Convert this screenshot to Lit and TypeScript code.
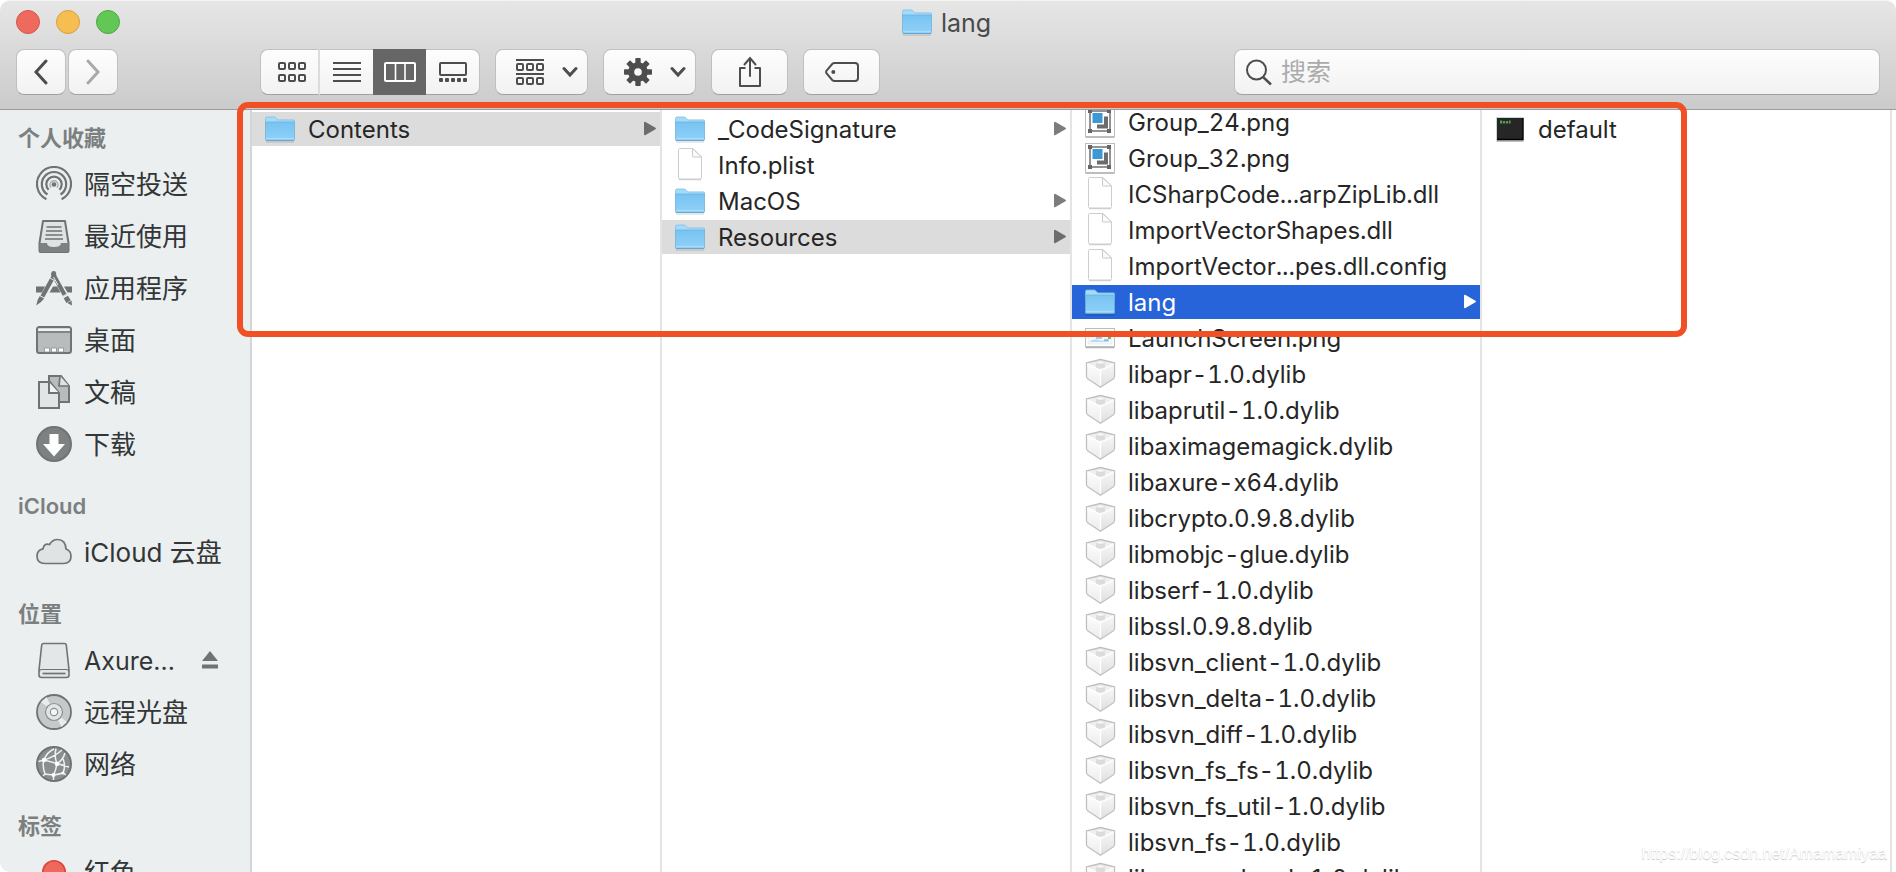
import { LitElement, html, css, svg } from "lit";
import { customElement, property } from "lit/decorators.js";
import { classMap } from "lit/directives/class-map.js";

type Kind = "folder" | "file" | "group" | "shot" | "brick" | "exec";
interface Entry { name: string; kind: Kind; open?: boolean; active?: boolean; }

const folderArt = html`<svg width="32" height="28" viewBox="0 0 32 28" aria-hidden="true">
  <defs>
    <linearGradient id="fb" x1="0" y1="0" x2="0" y2="1"><stop offset="0" stop-color="#77c3f1"/><stop offset="1" stop-color="#90d1f8"/></linearGradient>
  </defs>
  <path d="M2 27h28" stroke="#000" stroke-opacity=".12" stroke-width="1.5"/>
  <path d="M1.5 3.5q0-1.5 1.5-1.5h7q1 0 1.700.8l1.600 1.700q.4.400 1.200.4H29.500q1 0 1 1V10H1.500z" fill="#a3dbfb" stroke="#7dbfe6" stroke-width=".8"/>
  <path d="M1.500 7h29v17.500q0 1-1 1h-27q-1 0-1-1z" fill="url(#fb)" stroke="#6fb3dc" stroke-width=".8"/>
  <path d="M2 23.500h28" stroke="#a9dcf9" stroke-width="1"/>
  <path d="M2 25.500h28" stroke="#67a6cd" stroke-width="1"/>
</svg>`;

const fileArt = html`<svg width="32" height="34" viewBox="0 0 32 34" aria-hidden="true">
  <path d="M5 31.500h22" stroke="#000" stroke-opacity=".18" stroke-width="1.500"/>
  <path d="M5.500 .5h13.500L27.500 9v20.500q0 1.500-1.500 1.500H6q-1.500 0-1.500-1.500V1.500q0-1 1-1z" fill="#fff" stroke="#cdcdcd"/>
  <path d="M18.500 .5v7.500q0 1 1 1h8z" fill="#fbfbfb" stroke="#c9c9c9"/>
</svg>`;

const groupArt = html`<svg width="32" height="32" viewBox="0 0 32 32" aria-hidden="true">
  <path d="M1.500 31h29" stroke="#000" stroke-opacity=".35" stroke-width="1.500"/>
  <rect x="1.500" y="1.500" width="29" height="29" fill="#fff" stroke="#bdbdbd"/>
  <rect x="6" y="5" width="20" height="20" fill="none" stroke="#666" stroke-width="1.400"/>
  <path d="M13 20.500h9v-10" fill="none" stroke="#6c6c6c" stroke-width="4"/>
  <rect x="8" y="6.500" width="11" height="11" fill="#3d98d8" stroke="#fff"/>
  <path d="M4 3h4v4H4zM23 3h4v4h-4zM4 23h4v4H4zM23 23h4v4h-4z" fill="#666"/>
</svg>`;

const shotArt = html`<svg width="32" height="22" viewBox="0 0 32 22" aria-hidden="true">
  <path d="M1.500 20.500h29" stroke="#000" stroke-opacity=".3" stroke-width="1.500"/>
  <rect x="1.500" y="1.500" width="29" height="18" fill="#fff" stroke="#bdbdbd"/>
  <rect x="4" y="4" width="24" height="13" fill="#f3f8fb" stroke="#dde3e6" stroke-width=".6"/>
  <path d="M5 15q5-4 10-2t10-2v4z" fill="#b9dcee"/><path d="M12 11h6M20 13h4" stroke="#4aa0c8"/><rect x="24" y="9" width="3" height="3" fill="#71b95a"/>
</svg>`;

const brickArt = html`<svg width="32" height="32" viewBox="0 0 32 32" aria-hidden="true">
  <defs>
    <linearGradient id="bl" x1="0" y1="0" x2="0" y2="1"><stop offset="0" stop-color="#fdfdfd"/><stop offset="1" stop-color="#ececec"/></linearGradient>
    <linearGradient id="br" x1="0" y1="0" x2="0" y2="1"><stop offset="0" stop-color="#f7f7f7"/><stop offset="1" stop-color="#dfdfdf"/></linearGradient>
  </defs>
  <path d="M16.500 1.500L30.500 4.800v13.700q-.2 1.600-1.500 2.500L16.500 29.300 4 21Q2.700 20 2.500 18.500V4.800z" fill="#efefef" stroke="#bebebe" stroke-width="1.300" stroke-linejoin="round"/>
  <path d="M3.300 6.200L16.500 12.500V28.300L4.700 20.200q-1-.8-1.200-2z" fill="url(#bl)"/>
  <path d="M29.700 6.200L16.500 12.500V28.300L28.300 20.200q1-.8 1.200-2z" fill="url(#br)"/>
  <path d="M3.300 5.800l13.200 6.300 13.200-6.300M16.500 12v15" fill="none" stroke="#fff" stroke-width="1.400"/>
  <path d="M12 4.500v5q4.500 2.500 9 0v-5z" fill="#dcdcdc"/>
  <ellipse cx="16.500" cy="4.500" rx="4.500" ry="1.700" fill="#f7f7f7" stroke="#d2d2d2" stroke-width=".7"/>
</svg>`;

const execArt = html`<svg width="32" height="28" viewBox="0 0 32 28" aria-hidden="true">
  <path d="M2.500 26h27" stroke="#000" stroke-opacity=".25" stroke-width="2"/>
  <rect x="2.500" y="2.500" width="27" height="22" fill="#262626" stroke="#c5d6da"/>
  <path d="M3 24.500h26V3" fill="none" stroke="#000" stroke-width="1.300"/>
  <path d="M6 5.500h2.200v3H6zM9 6h2.200v2.500H9zM12 6h2.200v2.500H12zM15 5.500h1.600v3H15z" fill="#5bb552" opacity=".85"/>
</svg>`;

const ART: Record<Kind, unknown> = { folder: folderArt, file: fileArt, group: groupArt, shot: shotArt, brick: brickArt, exec: execArt };

const svgIcon = (w: number, h: number, body: unknown) =>
  html`<svg width=${w} height=${h} viewBox="0 0 ${w} ${h}" fill="none" aria-hidden="true">${body}</svg>`;

const chevron = svgIcon(16, 12, svg`<path d="M2 2.500l6 6.500 6-6.500" stroke="#4d4d4d" stroke-width="3" stroke-linecap="round"/>`);

const gearTeeth = [0, 45, 90, 135, 180, 225, 270, 315];

const TOOL = {
  back: svgIcon(16, 26, svg`<path d="M13 2L3 13l10 11" stroke="#4d4d4d" stroke-width="3" stroke-linecap="round"/>`),
  fwd: svgIcon(16, 26, svg`<path d="M3 2l10 11L3 24" stroke="#a9a9a9" stroke-width="3" stroke-linecap="round"/>`),
  grid: svgIcon(28, 20, svg`<g stroke="#4d4d4d" stroke-width="2">${[1, 11, 21].map(x => [1, 13].map(y => svg`<rect x=${x} y=${y} width="6" height="6" rx="1"/>`))}</g>`),
  list: svgIcon(28, 20, svg`<path d="M0 1h28M0 7h28M0 13h28M0 19h28" stroke="#4d4d4d" stroke-width="2"/>`),
  cols: svgIcon(32, 20, svg`<rect x="1" y="1" width="30" height="18" rx="1" stroke="#fff" stroke-width="2"/><path d="M11.500 1v18M21 1v18" stroke="#fff" stroke-width="1.600"/>`),
  gallery: svgIcon(28, 20, svg`<rect x="1" y="1" width="26" height="12" rx="1" stroke="#4d4d4d" stroke-width="2"/>${[0, 6, 12, 18, 24].map(x => svg`<rect x=${x} y="16" width="4" height="4" rx="1" fill="#4d4d4d"/>`)}`),
  arrange: svgIcon(28, 26, svg`<path d="M0 1h28M0 15h28" stroke="#4d4d4d" stroke-width="2"/><g stroke="#4d4d4d" stroke-width="2">${[1, 11, 21].map(x => [5, 19].map(y => svg`<rect x=${x} y=${y} width="6" height="6" rx="1"/>`))}</g>`),
  gear: svgIcon(28, 28, svg`${gearTeeth.map(a => svg`<rect x="11.300" y="0" width="5.400" height="8" rx=".8" fill="#4d4d4d" transform="rotate(${a} 14 14)"/>`)}<circle cx="14" cy="14" r="6.800" stroke="#4d4d4d" stroke-width="6"/>`),
  share: svgIcon(22, 32, svg`<path d="M6.500 12H1v18h20V12h-5.500" stroke="#4d4d4d" stroke-width="2" stroke-linejoin="round"/><path d="M11 20V3M5.500 8.500L11 2l5.500 6.500" stroke="#4d4d4d" stroke-width="2" stroke-linecap="round"/>`),
  tag: svgIcon(34, 20, svg`<path d="M9.500 1H30q3 0 3 3v12q0 3-3 3H9.500q-1.300 0-2.300-1L1.600 11.500q-1-1.500 0-3L7.200 2q1-1 2.300-1z" stroke="#4d4d4d" stroke-width="2"/><circle cx="8.300" cy="10" r="2" fill="#4d4d4d"/>`),
  search: svgIcon(28, 28, svg`<circle cx="11.500" cy="12" r="9.500" stroke="#4d4d4d" stroke-width="2"/><path d="M18 19l8 7.500" stroke="#4d4d4d" stroke-width="2.400"/>`),
};

const G = "#6f7373";
const SIDE = {
  airdrop: svgIcon(36, 36, svg`<g stroke=${G} stroke-width="2.200">
    <path d="M10.400 33.200A17 17 0 1 1 25.600 33.200"/><path d="M11.500 28.500A12.200 12.200 0 1 1 24.500 28.500" /><path d="M12.600 23.500A7.700 7.700 0 1 1 23.400 23.500" transform="translate(0 .3)"/></g>
    <path d="M15 21.500a4 4 0 1 1 6 0" stroke=${G} stroke-width="1.600" opacity=".5"/><circle cx="18" cy="18.500" r="2.300" fill=${G}/>`),
  recent: svgIcon(36, 36, svg`<path d="M7 3h22l3.500 22v8q0 1-1 1h-27q-1 0-1-1v-8z" fill="#dfe3e4" stroke=${G} stroke-width="2" stroke-linejoin="round"/>
    <path d="M10.500 9h15M10 13h16M9.500 17h17M9 21h18" stroke=${G} stroke-width="1.700"/><path d="M3.500 25H11q0 4 7 4t7-4h7.500v9h-29z" fill="#7d8182"/>`),
  apps: svgIcon(36, 36, svg`<path d="M0 16.500h9l-3.200 6H0zM17 16.500h4.200l3.300 6H13.500zM28 16.500H36v6h-4.500z" fill=${G}/>
    <path d="M18.800 4L5.800 27.500" stroke=${G} stroke-width="4.200"/><path d="M16.500 3L29 25.500" stroke=${G} stroke-width="4.200"/><circle cx="17.700" cy="3.300" r="2.400" fill=${G}/>
    <path d="M3.800 26l4.400 2.400Q5 32.500.3 35.500 .8 30 3.800 26z" fill=${G}/><path d="M29.800 27l2.800 4.600" stroke=${G} stroke-width="5"/><path d="M31.300 33l4.200-2.600.5 5z" fill=${G}/>
    <path d="M13.800 7.800l5 3M26.200 26.700l5.200-3M3.300 25.300l5.400 3M17.500 7l4.500 8" stroke="#ebeff0" stroke-width="1"/>`),
  desktop: svgIcon(36, 30, svg`<rect x="1" y="2" width="34" height="26" rx="2.500" fill="#b9bcbd" stroke=${G} stroke-width="2"/><path d="M2 3.500h32v2.500H2z" fill="#f0f3f4"/><path d="M1 7h34" stroke=${G} stroke-width="1.600"/><path d="M8.500 23h5v4h-5zM15.500 23h5v4h-5zM22.500 23h5v4h-5z" fill="#fff" stroke="#8a8d8e" stroke-width=".8"/>`),
  docs: svgIcon(36, 36, svg`<path d="M13 2h12l8 10v16H13z" fill="#b9bcbd" stroke=${G} stroke-width="2"/><path d="M24 2l-1 10h10" fill="#dfe3e4" stroke=${G} stroke-width="1.700"/><path d="M3 8h11l9 11v15H3z" fill="#e2e5e6" stroke=${G} stroke-width="2"/><path d="M13 8v11h10" fill="#f1f3f4" stroke=${G} stroke-width="2"/>`),
  down: svgIcon(36, 36, svg`<circle cx="18" cy="18" r="17" fill="#7d8182" stroke=${G} stroke-width="2"/><path d="M13.500 8h9v10h6.500L18 30.500 7 18h6.500z" fill="#fff"/>`),
  cloud: svgIcon(36, 30, svg`<path d="M9 26.500q-8 0-8-7.500 0-6 6-7.200Q8 5.800 13.500 7.500 16.500 2.500 21.500 2.500q8 0 8.500 9.500 5 1.800 5 7 0 7.500-7.500 7.500z" fill="#dfe3e4" stroke=${G} stroke-width="1.700"/>`),
  drive: svgIcon(36, 38, svg`<path d="M7.500 2.500h21q1.500 0 1.800 1.500L33 29v5q0 2.500-2.500 2.500h-25Q3 36.500 3 34v-5L5.700 4q.3-1.500 1.800-1.500z" fill="#e4e7e8" stroke=${G} stroke-width="1.600"/><path d="M3.500 30.500q0-2 2-2h25q2 0 2 2" stroke=${G} stroke-width="1.200"/><path d="M6.500 32.500h23" stroke=${G} stroke-width="1.700"/>`),
  disc: svgIcon(36, 36, svg`<circle cx="18" cy="18" r="17" fill="#c5c9ca" stroke=${G} stroke-width="1.800"/><path d="M18 18L5 8l5.500-5zM18 18l13 10-5.500 5z" fill="#e9eced"/><circle cx="18" cy="18" r="8.500" fill="#e1e5e6" stroke="#8b8f90" stroke-width="1.200"/><circle cx="18" cy="18" r="3.700" fill="#f4f6f6" stroke="#8b8f90" stroke-width="1.200"/>`),
  net: svgIcon(36, 36, svg`<circle cx="18" cy="18" r="17" fill="#8a8e8f" stroke=${G} stroke-width="2"/><g stroke="#eef1f1" stroke-width="1.500"><path d="M8 14Q11 6 18 3M8 14q8 2 13 3.500T33 21M21 17.500Q18 11 20 2.500M21 17.500Q27 14 29 7M8 14Q6 20 9 28M2.500 15.500L8 14M21 17.500Q20 24 17.500 29M9 28q9 2 18-1M27 27Q30 20 27 13M17.500 29v5M9 28l-2 2M27 27l3 2M8 14Q18 11 26 4"/></g><g fill="#fff"><circle cx="8" cy="14" r="2.200"/><circle cx="21" cy="18" r="2.200"/><circle cx="17.500" cy="29" r="2"/><circle cx="27" cy="27" r="1.600"/></g>`),
  red: svgIcon(36, 24, svg`<circle cx="18" cy="12" r="11.200" fill="#ec695c" stroke="#e0443a" stroke-width="1.600"/>`),
};

const SECTIONS: { title: string; items: { label: string; icon: keyof typeof SIDE; eject?: boolean }[] }[] = [
  { title: "个人收藏", items: [
    { label: "隔空投送", icon: "airdrop" }, { label: "最近使用", icon: "recent" }, { label: "应用程序", icon: "apps" },
    { label: "桌面", icon: "desktop" }, { label: "文稿", icon: "docs" }, { label: "下载", icon: "down" } ] },
  { title: "iCloud", items: [{ label: "iCloud 云盘", icon: "cloud" }] },
  { title: "位置", items: [
    { label: "Axure...", icon: "drive", eject: true }, { label: "远程光盘", icon: "disc" }, { label: "网络", icon: "net" } ] },
  { title: "标签", items: [{ label: "红色", icon: "red" }] },
];

const lib = (name: string): Entry => ({ name: `${name}.dylib`, kind: "brick" });
const COLUMNS: { scrolled?: boolean; entries: Entry[] }[] = [
  { entries: [{ name: "Contents", kind: "folder", open: true }] },
  { entries: [
    { name: "_CodeSignature", kind: "folder" }, { name: "Info.plist", kind: "file" },
    { name: "MacOS", kind: "folder" }, { name: "Resources", kind: "folder", open: true } ] },
  { scrolled: true, entries: [
    { name: "Group_24.png", kind: "group" }, { name: "Group_32.png", kind: "group" },
    { name: "ICSharpCode...arpZipLib.dll", kind: "file" }, { name: "ImportVectorShapes.dll", kind: "file" },
    { name: "ImportVector...pes.dll.config", kind: "file" }, { name: "lang", kind: "folder", active: true },
    { name: "LaunchScreen.png", kind: "shot" },
    ...["libapr-1.0", "libaprutil-1.0", "libaximagemagick", "libaxure-x64", "libcrypto.0.9.8", "libmobjc-glue", "libserf-1.0",
      "libssl.0.9.8", "libsvn_client-1.0", "libsvn_delta-1.0", "libsvn_diff-1.0", "libsvn_fs_fs-1.0", "libsvn_fs_util-1.0",
      "libsvn_fs-1.0", "libsvn_ra_local-1.0"].map(lib) ] },
  { entries: [{ name: "default", kind: "exec" }] },
];

const FONT = css`Inter, "Noto Sans CJK SC", sans-serif`;

@customElement("finder-toolbar")
class FinderToolbar extends LitElement {
  static styles = css`
    :host { display: block; font-family: ${FONT}; }
    .bar { height: 110px; box-sizing: border-box; border-top: 1px solid #f3f3f3; border-bottom: 1px solid #9c9c9c;
      background: linear-gradient(#e6e6e6, #cbcbcb); border-radius: 10px 10px 0 0; padding: 0 16px; }
    .title-row { display: grid; grid-template-columns: 104px 1fr 108px; align-items: center; height: 42px; }
    .lights { display: flex; gap: 16px; }
    .light { width: 24px; height: 24px; padding: 0; border-radius: 50%; border: 1px solid; }
    .close { background: #ee6a5f; border-color: #d5564c; }
    .min { background: #f6be50; border-color: #d8a040; }
    .max { background: #62c755; border-color: #4fa843; }
    .title { margin: 0; display: flex; align-items: center; justify-content: center; gap: 8px; font-size: 25px; line-height: 28px; font-weight: 400; color: #4a4a4a; }
    .name { padding-top: 2px; }
    .tools { display: flex; align-items: center; padding-top: 6px; }
    .btn { height: 46px; box-sizing: border-box; flex: none; display: flex; align-items: center; justify-content: center; padding: 0;
      border: 1px solid #c0c0c0; border-bottom-color: #a2a2a2; border-radius: 8px; background: linear-gradient(#fdfdfd, #f2f2f2); }
    .nav { width: 50px; margin-right: 2px; }
    .views { display: flex; flex: none; margin-left: 140px; width: 220px; }
    .views .btn { flex: 1 1 0; border-radius: 0; border-left-width: 0; border-right-width: 0; }
    .views .btn:first-child { border-radius: 8px 0 0 8px; border-left-width: 1px; border-right: 2px solid #dcdcdc; padding-left: 4px; }
    .views .btn:last-child { border-radius: 0 8px 8px 0; border-right-width: 1px; }
    .views .on { background: #666; border-color: #666; }
    .menu { width: 93px; margin-left: 15px; gap: 18px; justify-content: flex-start; padding-left: 20px; }
    .single { width: 77px; margin-left: 15px; }
    .btn.search { flex: 1 1 0; min-width: 0; margin-left: 354px; justify-content: flex-start; gap: 8px; padding: 0 10px; }
    .search input { flex: 1; min-width: 0; border: 0; background: none; outline: 0; padding: 0; font-family: ${FONT}; font-size: 25px; height: 36px; }
    .search input::placeholder { color: #ababab; opacity: 1; }
  `;
  render() {
    return html`<header class="bar">
      <div class="title-row">
        <div class="lights"><button class="light close" aria-label="关闭"></button><button class="light min" aria-label="最小化"></button><button class="light max" aria-label="缩放"></button></div>
        <h1 class="title">${folderArt}<span class="name">lang</span></h1>
      </div>
      <div class="tools">
        <button class="btn nav" aria-label="后退">${TOOL.back}</button>
        <button class="btn nav" aria-label="前进">${TOOL.fwd}</button>
        <div class="views" role="group" aria-label="显示">
          <button class="btn" aria-label="图标">${TOOL.grid}</button>
          <button class="btn" aria-label="列表">${TOOL.list}</button>
          <button class="btn on" aria-label="分栏" aria-pressed="true">${TOOL.cols}</button>
          <button class="btn" aria-label="画廊">${TOOL.gallery}</button>
        </div>
        <button class="btn menu" aria-label="分组">${TOOL.arrange}${chevron}</button>
        <button class="btn menu" aria-label="操作">${TOOL.gear}${chevron}</button>
        <button class="btn single" aria-label="共享">${TOOL.share}</button>
        <button class="btn single" aria-label="标签">${TOOL.tag}</button>
        <label class="btn search">${TOOL.search}<input type="search" placeholder="搜索" aria-label="搜索" /></label>
      </div>
    </header>`;
  }
}

@customElement("finder-sidebar")
class FinderSidebar extends LitElement {
  static styles = css`
    :host { display: block; font-family: ${FONT}; background: #ebeff0; overflow: hidden; border-right: 2px solid #d3d6d6; border-bottom-left-radius: 10px; }
    .nav { padding-top: 8px; }
    .section { margin-bottom: 16px; }
    .head { margin: 0; padding-left: 18px; font-size: 22px; line-height: 40px; height: 40px; font-weight: 600; color: #7c7f80; }
    .list { margin: 0; padding: 0; list-style: none; }
    .row { display: flex; align-items: center; height: 52px; padding: 0 32px 0 36px; }
    .link { flex: 1; display: flex; align-items: center; gap: 12px; font-size: 26px; line-height: 50px; color: #333637; text-decoration: none; white-space: nowrap; }
    .label { padding-top: 2px; }
    .latin { font-size: 25px; }
    .eject { border: 0; padding: 0; background: none; display: flex; }
  `;
  render() {
    return html`<nav class="nav">${SECTIONS.map(s => html`<section class="section">
      <h2 class="head">${s.title}</h2>
      <ul class="list">${s.items.map(i => html`<li class="row">
        <a class=${classMap({ link: true, latin: /^[ -~]+$/.test(i.label) })} href="#">${SIDE[i.icon]}<span class="label">${i.label}</span></a>
        ${i.eject ? html`<button class="eject" aria-label="推出">${svgIcon(16, 20, svg`<path d="M8 1l8 10H0zM0 14.500h16v4H0z" fill="#6f7373"/>`)}</button>` : ""}
      </li>`)}</ul></section>`)}</nav>`;
  }
}

@customElement("finder-column")
class FinderColumn extends LitElement {
  @property({ attribute: false }) entries: Entry[] = [];
  @property({ type: Boolean, reflect: true }) scrolled = false;
  static styles = css`
    :host { display: block; box-sizing: border-box; overflow: hidden; font-family: ${FONT}; border-right: 2px solid #e4e4e4; }
    .list { margin: 0; padding: 2px 0 0; list-style: none; display: grid; gap: 2px; }
    :host([scrolled]) .list { margin-top: -7px; }
    .row { height: 34px; display: flex; align-items: center; padding: 0 4px 0 12px; gap: 12px; font-size: 24px; line-height: 32px; font-variant-numeric: tabular-nums; color: #262626; white-space: nowrap; text-decoration: none; }
    .open { background: #dcdcdc; }
    .active { background: #2763d9; color: #fff; }
    .name { flex: 1; min-width: 0; padding-top: 2px; }
    .arrow { fill: #7c7c7c; }
    .open .arrow { fill: #6c6c6c; }
    .active .arrow { fill: #fff; }
    svg { flex: none; }
  `;
  render() {
    return html`<ul class="list">${this.entries.map(e => html`<li>
      <a href="#" class=${classMap({ row: true, open: !!e.open, active: !!e.active })}>
        ${ART[e.kind]}<span class="name">${e.name}</span>
        ${e.kind === "folder" ? html`<svg class="arrow" width="12" height="16" viewBox="0 0 12 16" aria-hidden="true"><path d="M0 2Q0 .3 1.500 1L11.500 6.800q.9.700 0 1.400L1.500 14Q0 14.700 0 13z"/></svg>` : ""}
      </a></li>`)}</ul>`;
  }
}

@customElement("app-root")
class AppRoot extends LitElement {
  static styles = css`
    :host { display: block; background: #fff; }
    .window { position: relative; height: 100vh; display: flex; flex-direction: column; overflow: hidden; }
    .body { flex: 1; min-height: 0; display: grid; grid-template-columns: 252px 1fr; }
    .browser { display: flex; min-width: 0; min-height: 0; overflow: hidden; }
    .col { flex: 0 0 410px; }
    .callout { position: absolute; left: 237px; top: 102px; width: 1450px; height: 235px; box-sizing: border-box; border: 6px solid #f15025; border-radius: 11px; pointer-events: none; }
    .mark { position: absolute; right: 9px; bottom: 8px; font: 16px/20px "Liberation Sans", Arial, sans-serif; color: #fff; text-shadow: 0 1px 1px #c4c4c4; }
  `;
  render() {
    return html`<main class="window">
      <finder-toolbar></finder-toolbar>
      <div class="body">
        <finder-sidebar></finder-sidebar>
        <div class="browser">${COLUMNS.map(c => html`<finder-column class="col" .entries=${c.entries} ?scrolled=${!!c.scrolled}></finder-column>`)}</div>
      </div>
      <div class="callout"></div>
      <span class="mark">https://blog.csdn.net/Amamamiyaa</span>
    </main>`;
  }
}
